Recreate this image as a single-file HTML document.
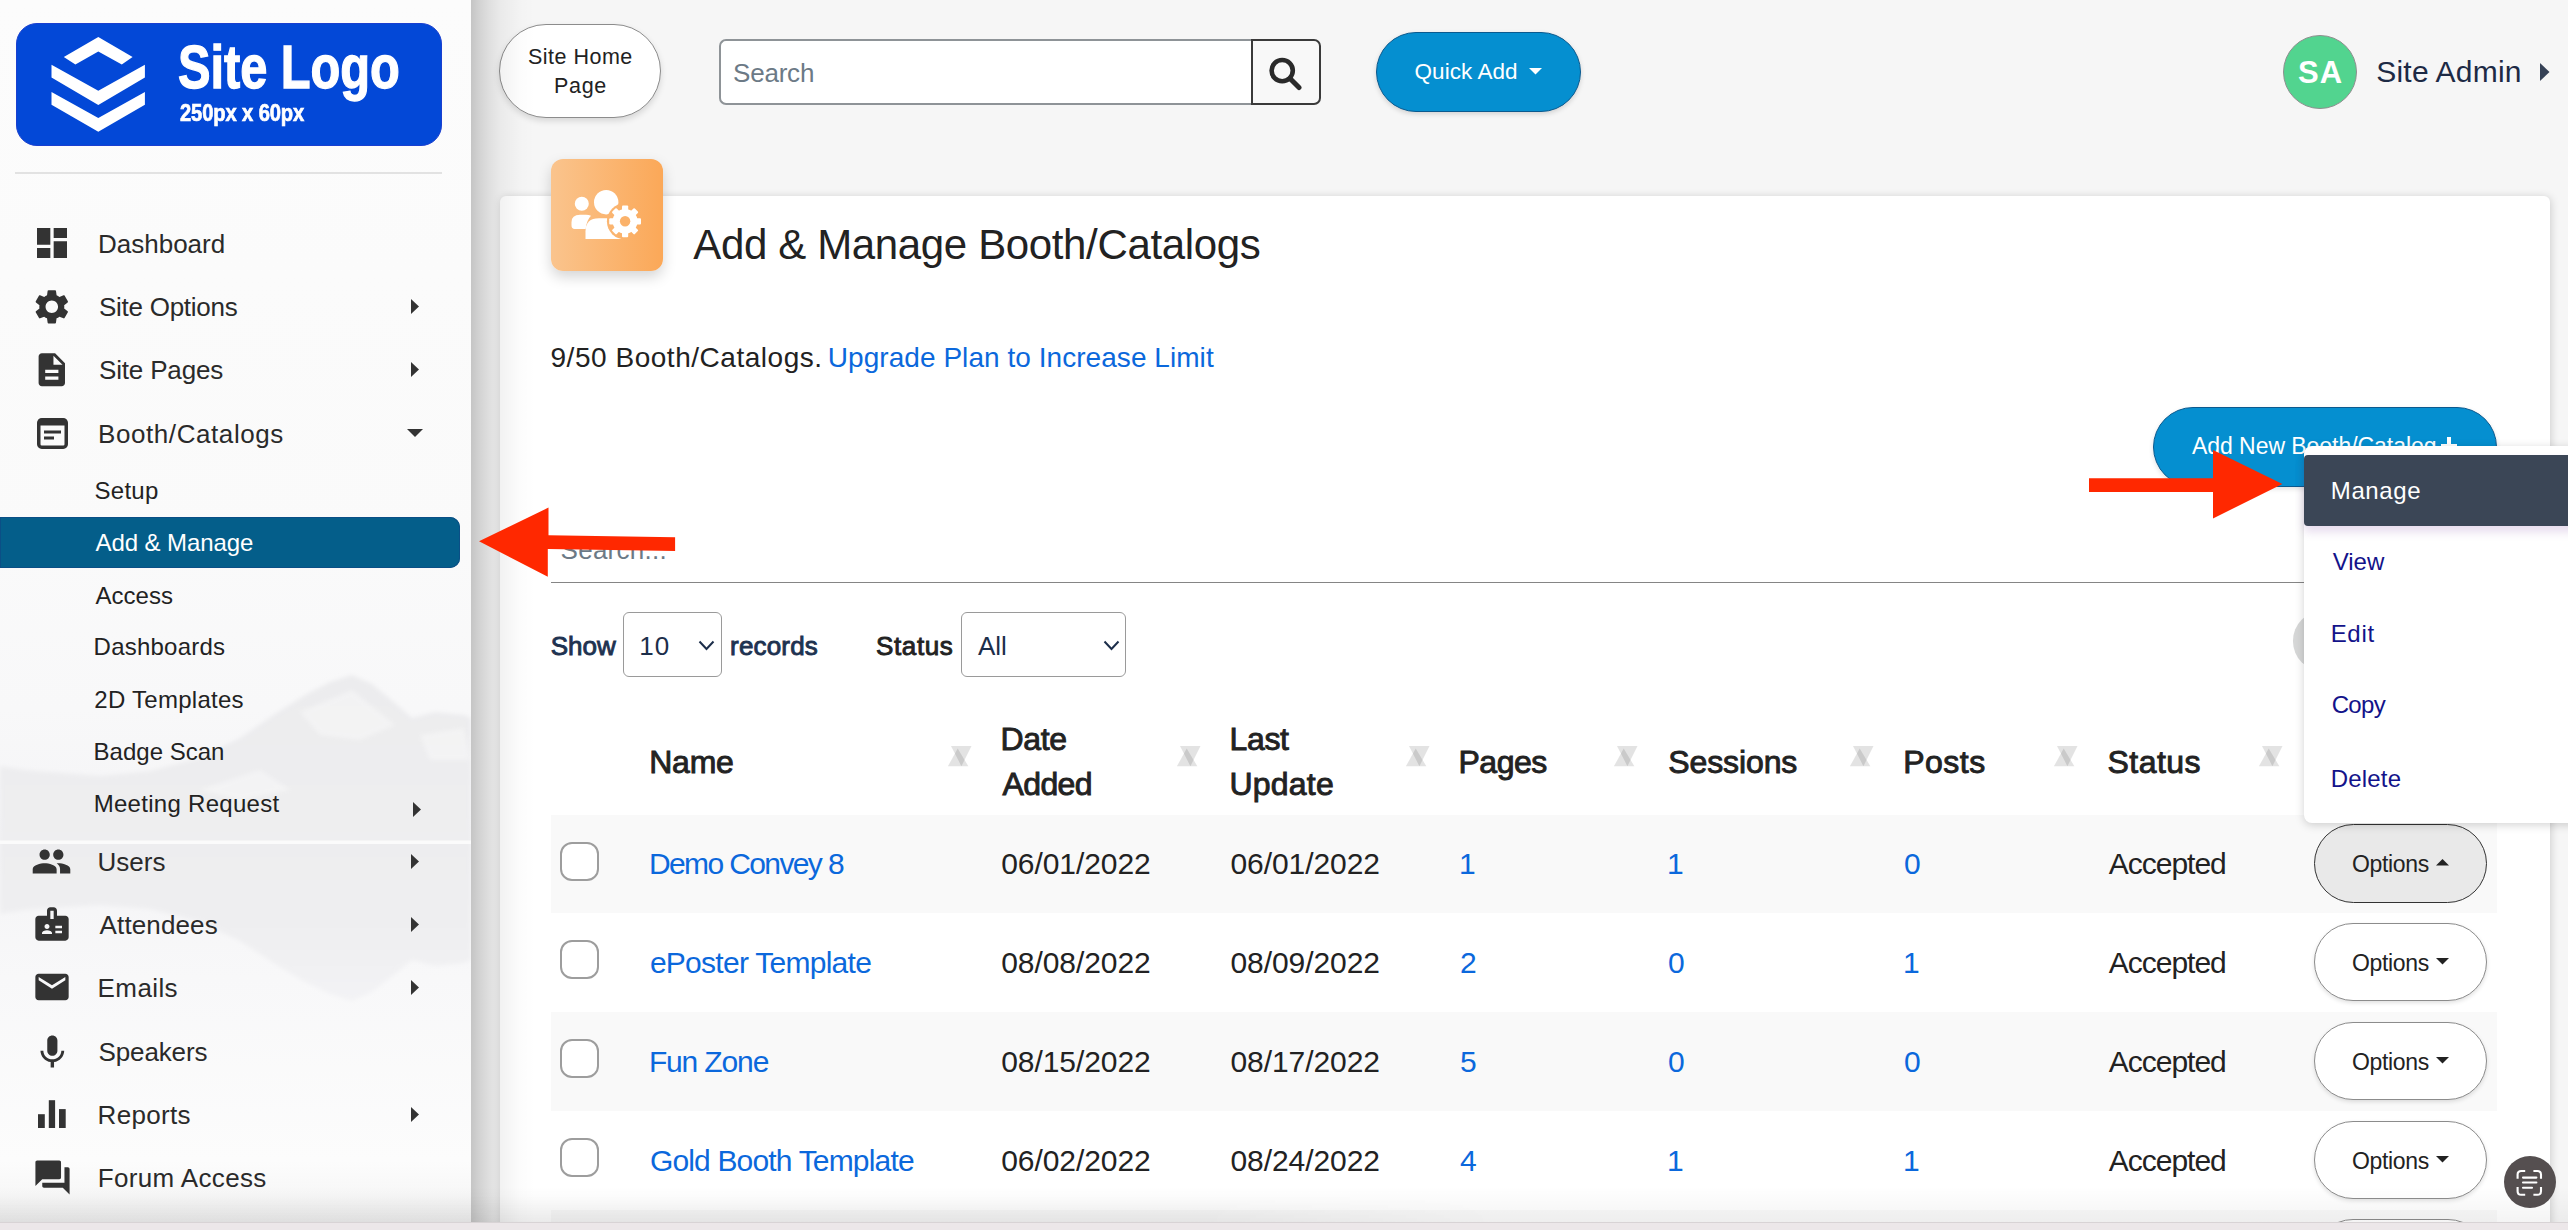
<!DOCTYPE html>
<html><head><meta charset="utf-8">
<style>
html,body{margin:0;padding:0;}
body{width:2568px;height:1230px;overflow:hidden;position:relative;background:#f6f6f6;font-family:'Liberation Sans',sans-serif;}
.t{position:absolute;white-space:nowrap;line-height:1;}
#sb{position:absolute;left:0;top:0;width:471px;height:1222px;background:#fbfbfb;overflow:hidden;}
</style></head><body>
<div id="sb">
<svg width="471" height="1222" style="position:absolute;left:0;top:0">
<defs>
<linearGradient id="mg" x1="0" y1="0" x2="0" y2="1"><stop offset="0" stop-color="#ececee"/><stop offset="1" stop-color="#eeeef0"/></linearGradient>
<linearGradient id="rg" x1="0" y1="0" x2="0" y2="1"><stop offset="0" stop-color="#ededef"/><stop offset="0.6" stop-color="#efeff1"/><stop offset="1" stop-color="#f3f3f5"/></linearGradient>
<linearGradient id="bgg" x1="0" y1="0" x2="0" y2="1"><stop offset="0" stop-color="#fcfcfc"/><stop offset="0.45" stop-color="#fafafa"/><stop offset="0.58" stop-color="#f8f8f9"/><stop offset="0.69" stop-color="#f4f4f6"/><stop offset="0.8" stop-color="#f8f8f9"/><stop offset="0.95" stop-color="#fcfcfc"/><stop offset="1" stop-color="#f3f3f3"/></linearGradient>
<filter id="bl"><feGaussianBlur stdDeviation="2"/></filter>
</defs>
<rect x="0" y="0" width="471" height="1222" fill="url(#bgg)"/>
<g filter="url(#bl)">
<polygon fill="url(#mg)" points="0,766 25,770 50,772 100,776 150,771 200,758 240,738 275,714 305,695 330,682 352,675 372,684 395,703 412,718 435,712 464,715 471,718 471,842 0,842"/>
<polygon fill="url(#rg)" points="0,842 471,842 471,960 464,963 435,966 412,960 395,974 372,992 352,1001 330,994 305,982 275,964 240,941 200,922 150,909 100,905 50,908 25,910 0,914"/>
</g>
<g fill="#fff" opacity=".35" filter="url(#bl)"><polygon points="300,712 352,690 395,725 360,740 320,735"/><polygon points="200,790 260,770 290,790 240,800"/><polygon points="420,735 464,728 470,760 430,760"/></g>
<rect x="0" y="840.5" width="471" height="3.5" fill="#fbfbfb"/>
</svg>
<div style="position:absolute;left:16px;top:23px;width:424px;height:121px;background:#0348d7;border:1px solid #1a3fd0;border-radius:21px;"></div>
<svg width="160" height="160" style="position:absolute;left:0;top:0" viewBox="0 0 160 160">
<polygon fill="#fff" points="98.3,37 132.6,57.1 121.8,64.4 98.3,51.4 75.4,64.4 63.8,57.1"/>
<polygon fill="#fff" points="51.5,64.7 98.3,90.8 144.9,64.7 144.9,77.6 98.3,105.1 51.5,77.6"/>
<polygon fill="#fff" points="51.5,92 98.3,118 144.9,92 144.9,104.8 98.3,131.8 51.5,104.8"/>
</svg>
<div class="t" style="left:177.7px;top:37.1px;font-size:61px;color:#fff;font-weight:700;letter-spacing:-0.06px;transform:scaleX(0.8);transform-origin:0 0;-webkit-text-stroke:1.3px #fff;">Site Logo</div>
<div class="t" style="left:180.0px;top:100.6px;font-size:24px;color:#fff;font-weight:700;letter-spacing:-0.14px;transform:scaleX(0.84);transform-origin:0 0;-webkit-text-stroke:0.7px #fff;">250px x 60px</div>
<div style="position:absolute;left:15px;top:172px;width:427px;height:2px;background:#e2e2e2"></div>
<svg width="40" height="40" viewBox="0 0 24 24" style="position:absolute;left:32px;top:223px"><path fill="#333" d="M3 13h8V3H3v10zm0 8h8v-6H3v6zm10 0h8V11h-8v10zm0-18v6h8V3h-8z"/></svg>
<div class="t" style="left:98.0px;top:230.9px;font-size:26px;color:#2a2a2a;">Dashboard</div>
<svg width="41.6" height="41.6" viewBox="0 0 24 24" style="position:absolute;left:30.8px;top:285.7px"><path fill="#333" d="M19.14 12.94c.04-.3.06-.61.06-.94 0-.32-.02-.64-.07-.94l2.03-1.58c.18-.14.23-.41.12-.61l-1.92-3.32c-.12-.22-.37-.29-.59-.22l-2.39.96c-.5-.38-1.03-.7-1.62-.94l-.36-2.54c-.04-.24-.24-.41-.48-.41h-3.84c-.24 0-.43.17-.47.41l-.36 2.54c-.59.24-1.13.57-1.62.94l-2.39-.96c-.22-.08-.47 0-.59.22L2.74 8.87c-.12.21-.08.47.12.61l2.03 1.58c-.05.3-.09.63-.09.94s.02.64.07.94l-2.03 1.58c-.18.14-.23.41-.12.61l1.92 3.32c.12.22.37.29.59.22l2.39-.96c.5.38 1.03.7 1.62.94l.36 2.54c.05.24.24.41.48.41h3.84c.24 0 .44-.17.47-.41l.36-2.54c.59-.24 1.13-.56 1.62-.94l2.39.96c.22.08.47 0 .59-.22l1.92-3.32c.12-.22.07-.47-.12-.61l-2.01-1.58zM12 15.6c-1.98 0-3.6-1.62-3.6-3.6s1.62-3.6 3.6-3.6 3.6 1.62 3.6 3.6-1.62 3.6-3.6 3.6z"/></svg>
<div class="t" style="left:99.0px;top:293.9px;font-size:26px;color:#2a2a2a;letter-spacing:-0.27px;">Site Options</div>
<svg width="8" height="15" style="position:absolute;left:411px;top:299.0px"><polygon points="0,0 8,7.5 0,15" fill="#333"/></svg>
<svg width="39.6" height="39.6" viewBox="0 0 24 24" style="position:absolute;left:31.7px;top:349.5px"><path fill="#333" d="M14 2H6c-1.1 0-1.99.9-1.99 2L4 20c0 1.1.89 2 1.99 2H18c1.1 0 2-.9 2-2V8l-6-6zm2 16H8v-2h8v2zm0-4H8v-2h8v2zm-3-5V3.5L18.5 9H13z"/></svg>
<div class="t" style="left:99.0px;top:357.1px;font-size:26px;color:#2a2a2a;letter-spacing:-0.17px;">Site Pages</div>
<svg width="8" height="15" style="position:absolute;left:411px;top:362.0px"><polygon points="0,0 8,7.5 0,15" fill="#333"/></svg>
<svg width="31" height="31" style="position:absolute;left:36.5px;top:417.5px"><rect x="1.75" y="1.75" width="27.5" height="27.5" rx="3" fill="none" stroke="#333" stroke-width="3.5"/><rect x="1.5" y="1.5" width="28" height="6" fill="#333"/><rect x="7" y="12.5" width="17" height="3" fill="#333"/><rect x="7" y="18.5" width="10" height="3" fill="#333"/></svg>
<div class="t" style="left:98.0px;top:420.7px;font-size:26px;color:#2a2a2a;letter-spacing:0.58px;">Booth/Catalogs</div>
<svg width="16" height="8" style="position:absolute;left:406.5px;top:429px"><polygon points="0,0 16,0 8,8" fill="#333"/></svg>
<div class="t" style="left:94.6px;top:478.9px;font-size:24px;color:#222;letter-spacing:0.25px;">Setup</div>
<div style="position:absolute;left:0px;top:516.6px;width:460px;height:51.2px;background:#045e8a;border-radius:0 10px 10px 0;box-shadow:inset 0 0 0 1px #0b4f86"></div>
<div class="t" style="left:95.6px;top:531.1px;font-size:24px;color:#fff;letter-spacing:-0.09px;">Add &amp; Manage</div>
<div class="t" style="left:95.6px;top:583.6px;font-size:24px;color:#222;">Access</div>
<div class="t" style="left:93.6px;top:635.2px;font-size:24px;color:#222;letter-spacing:0.22px;">Dashboards</div>
<div class="t" style="left:94.3px;top:687.5px;font-size:24px;color:#222;letter-spacing:0.27px;">2D Templates</div>
<div class="t" style="left:93.6px;top:739.5px;font-size:24px;color:#222;">Badge Scan</div>
<div class="t" style="left:93.7px;top:791.8px;font-size:24px;color:#222;letter-spacing:0.29px;">Meeting Request</div>
<svg width="8" height="15" style="position:absolute;left:413px;top:801.5px"><polygon points="0,0 8,7.5 0,15" fill="#333"/></svg>
<svg width="41" height="41" viewBox="0 0 24 24" style="position:absolute;left:31.2px;top:840.5px"><path fill="#333" d="M16 11c1.66 0 2.99-1.34 2.99-3S17.66 5 16 5c-1.66 0-3 1.34-3 3s1.34 3 3 3zm-8 0c1.66 0 2.99-1.34 2.99-3S9.66 5 8 5C6.34 5 5 6.34 5 8s1.34 3 3 3zm0 2c-2.33 0-7 1.17-7 3.5V19h14v-2.5c0-2.33-4.67-3.5-7-3.5zm8 0c-.29 0-.62.02-.97.05 1.16.84 1.97 1.97 1.97 3.45V19h6v-2.5c0-2.33-4.67-3.5-7-3.5z"/></svg>
<div class="t" style="left:97.6px;top:849.0px;font-size:26px;color:#2a2a2a;">Users</div>
<svg width="8" height="15" style="position:absolute;left:411px;top:853.5px"><polygon points="0,0 8,7.5 0,15" fill="#333"/></svg>
<svg width="40" height="40" viewBox="0 0 24 24" style="position:absolute;left:31.5px;top:904px"><path fill="#333" d="M20 7h-5V4c0-1.1-.9-2-2-2h-2c-1.1 0-2 .9-2 2v3H4c-1.1 0-2 .9-2 2v11c0 1.1.9 2 2 2h16c1.1 0 2-.9 2-2V9c0-1.1-.9-2-2-2zM9 12c.83 0 1.5.67 1.5 1.5S9.83 15 9 15s-1.5-.67-1.5-1.5S8.17 12 9 12zm3 6H6v-.43c0-.6.36-1.15.92-1.39.64-.28 1.34-.43 2.08-.43s1.44.15 2.08.43c.55.24.92.79.92 1.39V18zm1-9h-2V4h2v5zm5 8.5h-4V16h4v1.5zm0-3h-4V13h4v1.5z"/></svg>
<div class="t" style="left:99.6px;top:911.7px;font-size:26px;color:#2a2a2a;letter-spacing:0.12px;">Attendees</div>
<svg width="8" height="15" style="position:absolute;left:411px;top:916.5px"><polygon points="0,0 8,7.5 0,15" fill="#333"/></svg>
<svg width="40" height="40" viewBox="0 0 24 24" style="position:absolute;left:31.5px;top:967.3px"><path fill="#333" d="M20 4H4c-1.1 0-1.99.9-1.99 2L2 18c0 1.1.9 2 2 2h16c1.1 0 2-.9 2-2V6c0-1.1-.9-2-2-2zm0 4l-8 5-8-5V6l8 5 8-5v2z"/></svg>
<div class="t" style="left:97.6px;top:975.2px;font-size:26px;color:#2a2a2a;letter-spacing:0.40px;">Emails</div>
<svg width="8" height="15" style="position:absolute;left:411px;top:980.0px"><polygon points="0,0 8,7.5 0,15" fill="#333"/></svg>
<svg width="40.7" height="40.7" viewBox="0 0 24 24" style="position:absolute;left:31.5px;top:1032.4px"><path fill="#333" d="M12 14c1.66 0 2.99-1.34 2.99-3L15 5c0-1.66-1.34-3-3-3S9 3.34 9 5v6c0 1.66 1.34 3 3 3zm5.3-3c0 3-2.54 5.1-5.3 5.1S6.7 14 6.7 11H5c0 3.41 2.72 6.23 6 6.72V21h2v-3.28c3.28-.48 6-3.3 6-6.72h-1.7z"/></svg>
<div class="t" style="left:98.6px;top:1038.7px;font-size:26px;color:#2a2a2a;letter-spacing:-0.14px;">Speakers</div>
<svg width="30" height="30" style="position:absolute;left:36px;top:1099px"><rect x="2" y="15.2" width="6.8" height="13.8" fill="#333"/><rect x="12.8" y="1.2" width="6.3" height="27.8" fill="#333"/><rect x="23" y="10.1" width="6.7" height="18.9" fill="#333"/></svg>
<div class="t" style="left:97.6px;top:1101.6px;font-size:26px;color:#2a2a2a;letter-spacing:0.33px;">Reports</div>
<svg width="8" height="15" style="position:absolute;left:411px;top:1106.5px"><polygon points="0,0 8,7.5 0,15" fill="#333"/></svg>
<svg width="41" height="41" viewBox="0 0 24 24" style="position:absolute;left:31.5px;top:1157px"><path fill="#333" d="M21 6h-2v9H6v2c0 .55.45 1 1 1h11l4 4V7c0-.55-.45-1-1-1zm-4 6V3c0-.55-.45-1-1-1H3c-.55 0-1 .45-1 1v14l4-4h10c.55 0 1-.45 1-1z"/></svg>
<div class="t" style="left:97.7px;top:1164.9px;font-size:26px;color:#2a2a2a;letter-spacing:0.36px;">Forum Access</div>
</div>
<div style="position:absolute;left:499px;top:24px;width:160px;height:92px;background:#fff;border:1.5px solid #8c8c8c;border-radius:48px;box-shadow:0 3px 6px rgba(0,0,0,.13)"></div>
<div class="t" style="left:527.9px;top:46.6px;font-size:21.5px;color:#222;letter-spacing:0.50px;">Site Home</div>
<div class="t" style="left:554.0px;top:76.4px;font-size:21.5px;color:#222;letter-spacing:0.67px;">Page</div>
<div style="position:absolute;left:718.5px;top:38.6px;width:531px;height:62px;background:#fff;border:2px solid #8e9397;border-right:none;border-radius:7px 0 0 7px"></div>
<div class="t" style="left:733.0px;top:59.9px;font-size:26px;color:#6c7a86;letter-spacing:-0.20px;">Search</div>
<div style="position:absolute;left:1251px;top:38.6px;width:66px;height:62px;background:#f8f8f8;border:2px solid #3a3a3a;border-radius:0 7px 7px 0"></div>
<svg width="40" height="40" style="position:absolute;left:1262px;top:51px"><circle cx="20.2" cy="19.6" r="10.6" fill="none" stroke="#2a2a2a" stroke-width="4.6"/><line x1="28" y1="27.5" x2="37" y2="36.5" stroke="#2a2a2a" stroke-width="5" stroke-linecap="round"/></svg>
<div style="position:absolute;left:1376px;top:32px;width:202.5px;height:77.5px;background:#058fd0;border:1px solid #0b5a8f;border-radius:40px;box-shadow:0 2px 5px rgba(0,0,0,.15)"></div>
<div class="t" style="left:1414.5px;top:61.4px;font-size:22.5px;color:#fff;letter-spacing:0.06px;">Quick Add</div>
<svg width="13" height="7" style="position:absolute;left:1529px;top:67.5px"><polygon points="0,0 13,0 6.5,6.5" fill="#fff"/></svg>
<div style="position:absolute;left:2283px;top:35px;width:72px;height:72px;background:#52d48f;border:1px solid #8f8f8f;border-radius:50%"></div>
<div class="t" style="left:2298.0px;top:56.7px;font-size:31px;color:#fff;font-weight:700;letter-spacing:1.00px;">SA</div>
<div class="t" style="left:2376.3px;top:56.9px;font-size:30px;color:#1d2a45;letter-spacing:0.19px;">Site Admin</div>
<svg width="10" height="18" style="position:absolute;left:2540.4px;top:62.7px"><polygon points="0,0 9.5,9 0,18" fill="#364256"/></svg>
<div style="position:absolute;left:500px;top:196px;width:2050px;height:1100px;background:#fff;border-radius:6px;box-shadow:1px 1px 8px rgba(0,0,0,.17)"></div>
<div style="position:absolute;left:551px;top:159px;width:112px;height:112px;border-radius:12px;box-shadow:0 6px 14px rgba(0,0,0,.17)"></div>
<svg width="112" height="112" style="position:absolute;left:551px;top:159px">
<defs><linearGradient id="og" gradientUnits="userSpaceOnUse" x1="0" y1="0" x2="112" y2="0"><stop offset="0" stop-color="#fac48d"/><stop offset="1" stop-color="#fba858"/></linearGradient></defs>
<rect width="112" height="112" rx="12" fill="url(#og)"/>
<circle cx="30.8" cy="44.7" r="7" fill="#fff"/>
<path d="M20.5 66.2 v-3 q0-7.5 8.5-7.5 h6 q3 0 5 1 q-4.5 4.5-5.3 13.3 h-11 q-3.2 0-3.2-3.8z" fill="#fff"/>
<circle cx="55.2" cy="43.2" r="12.2" fill="#fff"/>
<path d="M34.5 80 v-7.5 q0-13.2 13.5-13.2 h8 q5 0 9 2 L70 80z" fill="#fff"/>
<g transform="translate(74.1,62.3)">
<circle r="18.2" fill="url(#og)" transform="translate(-74.1,-62.3)" cx="74.1" cy="62.3"/>
<g fill="#fff"><circle r="12.4"/><rect x="-3.1" y="-15.9" width="6.2" height="8" rx="1" transform="rotate(0)"/><rect x="-3.1" y="-15.9" width="6.2" height="8" rx="1" transform="rotate(45)"/><rect x="-3.1" y="-15.9" width="6.2" height="8" rx="1" transform="rotate(90)"/><rect x="-3.1" y="-15.9" width="6.2" height="8" rx="1" transform="rotate(135)"/><rect x="-3.1" y="-15.9" width="6.2" height="8" rx="1" transform="rotate(180)"/><rect x="-3.1" y="-15.9" width="6.2" height="8" rx="1" transform="rotate(225)"/><rect x="-3.1" y="-15.9" width="6.2" height="8" rx="1" transform="rotate(270)"/><rect x="-3.1" y="-15.9" width="6.2" height="8" rx="1" transform="rotate(315)"/></g>
<circle r="5.2" fill="#fbb26a"/>
</g>
</svg>
<div class="t" style="left:693.3px;top:224.0px;font-size:42px;color:#222;letter-spacing:-0.36px;">Add &amp; Manage Booth/Catalogs</div>
<div class="t" style="left:550.5px;top:344.2px;font-size:28px;color:#222;letter-spacing:0.53px;">9/50 Booth/Catalogs.</div>
<div class="t" style="left:827.8px;top:344.2px;font-size:28px;color:#0b68dc;letter-spacing:0.05px;">Upgrade Plan to Increase Limit</div>
<div style="position:absolute;left:2153px;top:407px;width:342px;height:78px;background:#058fd0;border:1px solid #0b5a8f;border-radius:40px;box-shadow:0 2px 5px rgba(0,0,0,.12)"></div>
<div class="t" style="left:2192.0px;top:435.4px;font-size:23px;color:#fff;letter-spacing:-0.05px;">Add New Booth/Catalog</div>
<svg width="16" height="18" style="position:absolute;left:2441px;top:437px"><rect x="6" y="0" width="4" height="18" fill="#fff"/><rect x="0" y="7" width="16" height="4" fill="#fff"/></svg>
<div class="t" style="left:560.6px;top:537.1px;font-size:26px;color:#6c7a86;letter-spacing:0.25px;">Search...</div>
<div style="position:absolute;left:551px;top:581.8px;width:1760px;height:1.6px;background:#858585"></div>
<div style="position:absolute;left:2293px;top:611.3px;width:59.4px;height:59.4px;background:#d6d7d7;border-radius:50%"></div>
<div class="t" style="left:550.7px;top:633.3px;font-size:26px;color:#1e3250;-webkit-text-stroke:0.9px #1e3250;">Show</div>
<div style="position:absolute;left:623px;top:612px;width:97px;height:63px;background:#fff;border:1.5px solid #9a9a9a;border-radius:6px"></div>
<div class="t" style="left:639.2px;top:633.3px;font-size:26px;color:#1c2e4a;letter-spacing:1.00px;">10</div>
<svg width="18" height="11" style="position:absolute;left:698px;top:639.5px"><polyline points="1.5,1.5 8.5,9 15.5,1.5" fill="none" stroke="#1c2e4a" stroke-width="2"/></svg>
<div class="t" style="left:730.1px;top:633.3px;font-size:26px;color:#1e3250;-webkit-text-stroke:0.9px #1e3250;letter-spacing:0.17px;">records</div>
<div class="t" style="left:876.1px;top:633.3px;font-size:26px;color:#222;-webkit-text-stroke:0.9px #222;letter-spacing:0.60px;">Status</div>
<div style="position:absolute;left:961px;top:612px;width:163px;height:63px;background:#fff;border:1.5px solid #9a9a9a;border-radius:6px"></div>
<div class="t" style="left:978.0px;top:633.3px;font-size:26px;color:#1c2e4a;">All</div>
<svg width="18" height="11" style="position:absolute;left:1102.5px;top:639.5px"><polyline points="1.5,1.5 8.5,9 15.5,1.5" fill="none" stroke="#1c2e4a" stroke-width="2"/></svg>
<div class="t" style="left:649.2px;top:745.8px;font-size:32px;color:#222;-webkit-text-stroke:0.9px #222;letter-spacing:-0.23px;">Name</div>
<div class="t" style="left:1000.5px;top:723.2px;font-size:32px;color:#222;-webkit-text-stroke:0.9px #222;letter-spacing:-0.33px;">Date</div>
<div class="t" style="left:1002.5px;top:767.6px;font-size:32px;color:#222;-webkit-text-stroke:0.9px #222;letter-spacing:-0.62px;">Added</div>
<div class="t" style="left:1229.5px;top:723.2px;font-size:32px;color:#222;-webkit-text-stroke:0.9px #222;letter-spacing:-0.33px;">Last</div>
<div class="t" style="left:1229.5px;top:767.6px;font-size:32px;color:#222;-webkit-text-stroke:0.9px #222;letter-spacing:0.20px;">Update</div>
<div class="t" style="left:1458.5px;top:746.0px;font-size:32px;color:#222;-webkit-text-stroke:0.9px #222;letter-spacing:-0.50px;">Pages</div>
<div class="t" style="left:1668.2px;top:746.0px;font-size:32px;color:#222;-webkit-text-stroke:0.9px #222;letter-spacing:-0.10px;">Sessions</div>
<div class="t" style="left:1903.2px;top:746.0px;font-size:32px;color:#222;-webkit-text-stroke:0.9px #222;letter-spacing:0.50px;">Posts</div>
<div class="t" style="left:2107.4px;top:746.0px;font-size:32px;color:#222;-webkit-text-stroke:0.9px #222;letter-spacing:0.50px;">Status</div>
<svg width="28" height="24" style="position:absolute;left:947.0px;top:745.4px"><polygon points="4,1 24.5,1 14.4,21.2" fill="#000" fill-opacity=".11"/><polygon points="0.9,21.3 21.4,21.3 10.7,3.6" fill="#000" fill-opacity=".11"/></svg>
<svg width="28" height="24" style="position:absolute;left:1176.0px;top:745.4px"><polygon points="4,1 24.5,1 14.4,21.2" fill="#000" fill-opacity=".11"/><polygon points="0.9,21.3 21.4,21.3 10.7,3.6" fill="#000" fill-opacity=".11"/></svg>
<svg width="28" height="24" style="position:absolute;left:1405.4px;top:745.4px"><polygon points="4,1 24.5,1 14.4,21.2" fill="#000" fill-opacity=".11"/><polygon points="0.9,21.3 21.4,21.3 10.7,3.6" fill="#000" fill-opacity=".11"/></svg>
<svg width="28" height="24" style="position:absolute;left:1613.3px;top:745.4px"><polygon points="4,1 24.5,1 14.4,21.2" fill="#000" fill-opacity=".11"/><polygon points="0.9,21.3 21.4,21.3 10.7,3.6" fill="#000" fill-opacity=".11"/></svg>
<svg width="28" height="24" style="position:absolute;left:1849.3px;top:745.4px"><polygon points="4,1 24.5,1 14.4,21.2" fill="#000" fill-opacity=".11"/><polygon points="0.9,21.3 21.4,21.3 10.7,3.6" fill="#000" fill-opacity=".11"/></svg>
<svg width="28" height="24" style="position:absolute;left:2053.2px;top:745.4px"><polygon points="4,1 24.5,1 14.4,21.2" fill="#000" fill-opacity=".11"/><polygon points="0.9,21.3 21.4,21.3 10.7,3.6" fill="#000" fill-opacity=".11"/></svg>
<svg width="28" height="24" style="position:absolute;left:2258.2px;top:745.4px"><polygon points="4,1 24.5,1 14.4,21.2" fill="#000" fill-opacity=".11"/><polygon points="0.9,21.3 21.4,21.3 10.7,3.6" fill="#000" fill-opacity=".11"/></svg>
<div style="position:absolute;left:551px;top:814.5px;width:1946px;height:98.79999999999995px;background:#f9f9f9"></div>
<div style="position:absolute;left:551px;top:1012.3px;width:1946px;height:98.90000000000009px;background:#f9f9f9"></div>
<div style="position:absolute;left:551px;top:1210px;width:1946px;height:40px;background:#f9f9f9"></div>
<div style="position:absolute;left:560px;top:841.5px;width:35px;height:35px;background:#fff;border:2px solid #9d9d9d;border-radius:12px"></div>
<div class="t" style="left:648.9px;top:849.3px;font-size:30px;color:#0b68dc;letter-spacing:-1.61px;">Demo Convey 8</div>
<div class="t" style="left:1001.2px;top:849.3px;font-size:30px;color:#222;letter-spacing:-0.07px;">06/01/2022</div>
<div class="t" style="left:1230.5px;top:849.3px;font-size:30px;color:#222;letter-spacing:-0.07px;">06/01/2022</div>
<div class="t" style="left:1459.0px;top:849.3px;font-size:30px;color:#0b68dc;">1</div>
<div class="t" style="left:1667.0px;top:849.3px;font-size:30px;color:#0b68dc;">1</div>
<div class="t" style="left:1904.0px;top:849.3px;font-size:30px;color:#0b68dc;">0</div>
<div class="t" style="left:2108.7px;top:849.3px;font-size:30px;color:#222;letter-spacing:-1.00px;">Accepted</div>
<div style="position:absolute;left:2314px;top:824.0px;width:171px;height:76.5px;background:#e9e9e9;border:1.5px solid #333;border-radius:40px"></div>
<div class="t" style="left:2352.0px;top:852.8px;font-size:23px;color:#222;letter-spacing:-0.33px;">Options</div>
<svg width="13" height="7" style="position:absolute;left:2436px;top:858.5px"><polygon points="0,6.5 13,6.5 6.5,0" fill="#222"/></svg>
<div style="position:absolute;left:560px;top:940.3px;width:35px;height:35px;background:#fff;border:2px solid #9d9d9d;border-radius:12px"></div>
<div class="t" style="left:649.9px;top:948.1px;font-size:30px;color:#0b68dc;letter-spacing:-0.73px;">ePoster Template</div>
<div class="t" style="left:1001.2px;top:948.1px;font-size:30px;color:#222;letter-spacing:-0.07px;">08/08/2022</div>
<div class="t" style="left:1230.5px;top:948.1px;font-size:30px;color:#222;letter-spacing:-0.07px;">08/09/2022</div>
<div class="t" style="left:1460.0px;top:948.1px;font-size:30px;color:#0b68dc;">2</div>
<div class="t" style="left:1668.0px;top:948.1px;font-size:30px;color:#0b68dc;">0</div>
<div class="t" style="left:1903.0px;top:948.1px;font-size:30px;color:#0b68dc;">1</div>
<div class="t" style="left:2108.7px;top:948.1px;font-size:30px;color:#222;letter-spacing:-1.00px;">Accepted</div>
<div style="position:absolute;left:2314px;top:922.8px;width:171px;height:76.5px;background:#fff;border:1.5px solid #8c8c8c;border-radius:40px;box-shadow:0 2px 4px rgba(0,0,0,.12)"></div>
<div class="t" style="left:2352.0px;top:952.0px;font-size:23px;color:#222;letter-spacing:-0.33px;">Options</div>
<svg width="13" height="7" style="position:absolute;left:2436px;top:957.8px"><polygon points="0,0 13,0 6.5,6.5" fill="#222"/></svg>
<div style="position:absolute;left:560px;top:1039.3px;width:35px;height:35px;background:#fff;border:2px solid #9d9d9d;border-radius:12px"></div>
<div class="t" style="left:648.9px;top:1047.1px;font-size:30px;color:#0b68dc;letter-spacing:-1.14px;">Fun Zone</div>
<div class="t" style="left:1001.2px;top:1047.1px;font-size:30px;color:#222;letter-spacing:-0.07px;">08/15/2022</div>
<div class="t" style="left:1230.5px;top:1047.1px;font-size:30px;color:#222;letter-spacing:-0.07px;">08/17/2022</div>
<div class="t" style="left:1460.0px;top:1047.1px;font-size:30px;color:#0b68dc;">5</div>
<div class="t" style="left:1668.0px;top:1047.1px;font-size:30px;color:#0b68dc;">0</div>
<div class="t" style="left:1904.0px;top:1047.1px;font-size:30px;color:#0b68dc;">0</div>
<div class="t" style="left:2108.7px;top:1047.1px;font-size:30px;color:#222;letter-spacing:-1.00px;">Accepted</div>
<div style="position:absolute;left:2314px;top:1021.8px;width:171px;height:76.5px;background:#fff;border:1.5px solid #8c8c8c;border-radius:40px;box-shadow:0 2px 4px rgba(0,0,0,.12)"></div>
<div class="t" style="left:2352.0px;top:1051.0px;font-size:23px;color:#222;letter-spacing:-0.33px;">Options</div>
<svg width="13" height="7" style="position:absolute;left:2436px;top:1056.8px"><polygon points="0,0 13,0 6.5,6.5" fill="#222"/></svg>
<div style="position:absolute;left:560px;top:1138.2px;width:35px;height:35px;background:#fff;border:2px solid #9d9d9d;border-radius:12px"></div>
<div class="t" style="left:649.9px;top:1146.0px;font-size:30px;color:#0b68dc;letter-spacing:-0.83px;">Gold Booth Template</div>
<div class="t" style="left:1001.2px;top:1146.0px;font-size:30px;color:#222;letter-spacing:-0.07px;">06/02/2022</div>
<div class="t" style="left:1230.5px;top:1146.0px;font-size:30px;color:#222;letter-spacing:-0.07px;">08/24/2022</div>
<div class="t" style="left:1460.0px;top:1146.0px;font-size:30px;color:#0b68dc;">4</div>
<div class="t" style="left:1667.0px;top:1146.0px;font-size:30px;color:#0b68dc;">1</div>
<div class="t" style="left:1903.0px;top:1146.0px;font-size:30px;color:#0b68dc;">1</div>
<div class="t" style="left:2108.7px;top:1146.0px;font-size:30px;color:#222;letter-spacing:-1.00px;">Accepted</div>
<div style="position:absolute;left:2314px;top:1120.7px;width:171px;height:76.5px;background:#fff;border:1.5px solid #8c8c8c;border-radius:40px;box-shadow:0 2px 4px rgba(0,0,0,.12)"></div>
<div class="t" style="left:2352.0px;top:1150.0px;font-size:23px;color:#222;letter-spacing:-0.33px;">Options</div>
<svg width="13" height="7" style="position:absolute;left:2436px;top:1155.7px"><polygon points="0,0 13,0 6.5,6.5" fill="#222"/></svg>
<div style="position:absolute;left:2314px;top:1219px;width:171px;height:76px;background:#fff;border:1.5px solid #8c8c8c;border-radius:40px"></div>
<div style="position:absolute;left:2304px;top:446px;width:300px;height:377px;background:#fff;border-radius:8px;box-shadow:0 2px 10px rgba(0,0,0,.18)"></div>
<div style="position:absolute;left:2304px;top:455.4px;width:280px;height:70.3px;background:#3b4656;border-radius:4px 0 0 4px;box-shadow:0 6px 10px rgba(120,60,160,.18)"></div>
<div class="t" style="left:2330.8px;top:478.7px;font-size:24px;color:#fff;letter-spacing:0.60px;">Manage</div>
<div class="t" style="left:2332.7px;top:549.9px;font-size:24px;color:#13138a;">View</div>
<div class="t" style="left:2330.7px;top:622.3px;font-size:24px;color:#13138a;letter-spacing:0.67px;">Edit</div>
<div class="t" style="left:2331.7px;top:693.3px;font-size:24px;color:#13138a;letter-spacing:-0.67px;">Copy</div>
<div class="t" style="left:2330.7px;top:766.8px;font-size:24px;color:#13138a;letter-spacing:0.20px;">Delete</div>
<div style="position:absolute;left:471px;top:0px;width:64px;height:1222px;background:linear-gradient(90deg,rgba(0,0,0,.2) 0,rgba(0,0,0,.14) 9px,rgba(0,0,0,.09) 19px,rgba(0,0,0,.05) 29px,rgba(0,0,0,.03) 39px,rgba(0,0,0,.012) 49px,rgba(0,0,0,0) 64px)"></div>
<svg width="2568" height="1230" style="position:absolute;left:0;top:0;pointer-events:none"><polygon fill="#ff2800" points="479,541.2 548.5,507.6 548.5,535.3 675.1,537.2 675.1,550.9 547.8,549 547.8,576.7"/><polygon fill="#ff2800" points="2089,478.2 2213,478.2 2213,450.1 2282.4,483.9 2213,518.5 2213,491.9 2089,491.9"/></svg>
<div style="position:absolute;left:2504px;top:1156px;width:52px;height:52px;background:#554f50;border-radius:50%"></div>
<svg width="30" height="30" style="position:absolute;left:2515px;top:1168px" fill="none" stroke="#fff" stroke-width="2.1">
<path d="M2.6 10.8V6.6q0-3.6 3.6-3.6h4M18.4 3h4q3.6 0 3.6 3.6v4.2M26 19v4.2q0 3.6-3.6 3.6h-4M10.2 26.8h-4q-3.6 0-3.6-3.6V19"/>
<g stroke-linecap="round"><line x1="8" y1="9.6" x2="21.4" y2="9.6"/><line x1="8" y1="14.5" x2="21.4" y2="14.5"/><line x1="8" y1="19.7" x2="17" y2="19.7"/></g>
</svg>
<div style="position:absolute;left:0px;top:1186px;width:2568px;height:36px;background:linear-gradient(180deg,rgba(0,0,0,0),rgba(0,0,0,.045))"></div>
<div style="position:absolute;left:0px;top:1196px;width:1500px;height:26px;background:linear-gradient(180deg,rgba(0,0,0,0),rgba(0,0,0,.04));-webkit-mask-image:linear-gradient(90deg,#000 80%,transparent)"></div>
<div style="position:absolute;left:0px;top:1222px;width:2568px;height:8px;background:#ece7e9;border-top:1px solid #d8d3d5;box-sizing:border-box"></div>
</body></html>
